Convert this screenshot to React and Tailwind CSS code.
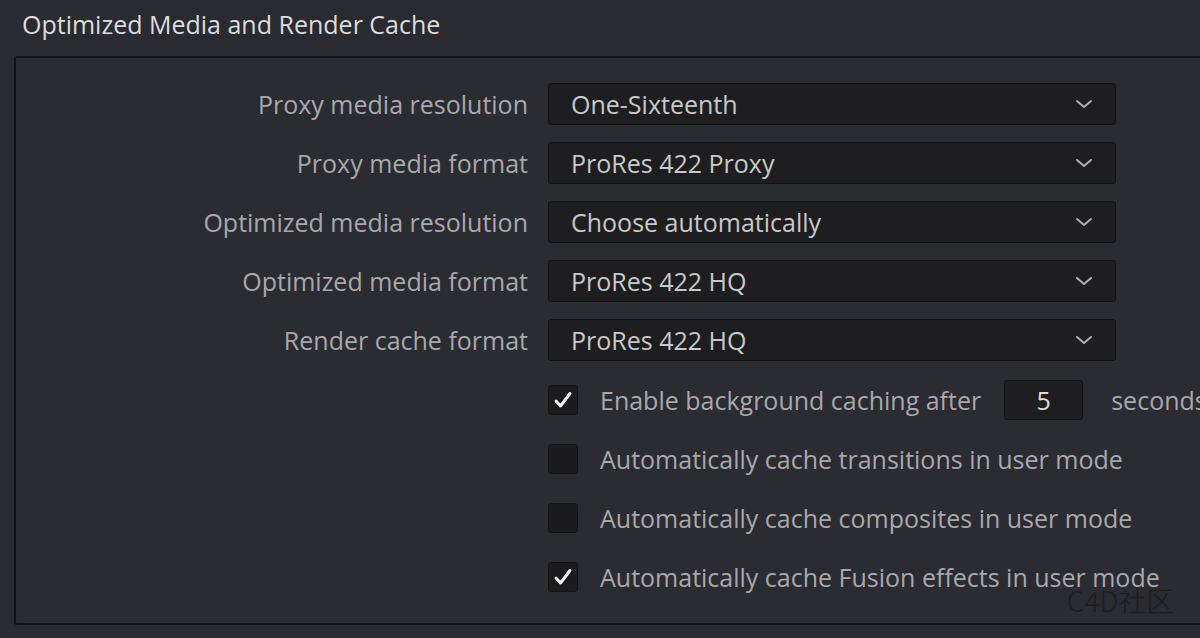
import React, { useState } from 'react'

const selects = [
  { label: 'Proxy media resolution', value: 'One-Sixteenth' },
  { label: 'Proxy media format', value: 'ProRes 422 Proxy' },
  { label: 'Optimized media resolution', value: 'Choose automatically' },
  { label: 'Optimized media format', value: 'ProRes 422 HQ' },
  { label: 'Render cache format', value: 'ProRes 422 HQ' },
]

function Chevron() {
  return (
    <svg width="18" height="12" viewBox="0 0 18 12" fill="none">
      <path d="M2 3l7 6 7-6" stroke="#b0b0b3" strokeWidth="2" strokeLinecap="round" strokeLinejoin="round" />
    </svg>
  )
}

function Checkbox({ checked, onClick }) {
  return (
    <button type="button" onClick={onClick} className="w-[30px] h-[30px] shrink-0 rounded-[3px] bg-[#1c1c1f] border border-[#141416] flex items-center justify-center">
      {checked && (
        <svg width="20" height="20" viewBox="0 0 20 20" fill="none">
          <path d="M3 11l4.5 5L17 3.5" stroke="#f2f2f2" strokeWidth="3" strokeLinecap="round" strokeLinejoin="round" />
        </svg>
      )}
    </button>
  )
}

export default function App() {
  const [checks, setchecks] = useState([true, false, false, true])
  const toggle = (i) => setchecks(checks.map((c, j) => (j === i ? !c : c)))

  return (
    <div className="w-[1200px] h-[638px] overflow-hidden bg-[#2a2a31] font-['Open_Sans',sans-serif] relative">
      <h1 className="pl-[22px] pt-[5px] h-[56px] text-[25px] text-[#dcdcde] leading-[38px]">Optimized Media and Render Cache</h1>
      <div className="ml-[14px] w-[1200px] h-[569px] border-2 border-[#141417] rounded-[3px] bg-[#2b2b32] pt-[25px]">
        <div className="flex flex-col gap-[17px]">
          {selects.map((s) => (
            <div key={s.label} className="flex items-center">
              <span className="w-[512px] text-right text-[25px] text-[#a8a8ac] leading-none whitespace-nowrap">{s.label}</span>
              <div className="ml-[20px] w-[568px] h-[42px] bg-[#1e1e21] border border-[#131315] rounded-[3px] flex items-center justify-between pl-[22px] pr-[22px]">
                <span className="text-[25px] text-[#c8c8cb] leading-none">{s.value}</span>
                <Chevron />
              </div>
            </div>
          ))}
        </div>
        <div className="flex flex-col gap-[29px] mt-[24px] ml-[532px]">
          <div className="flex items-center h-[30px]">
            <Checkbox checked={checks[0]} onClick={() => toggle(0)} />
            <span className="ml-[22px] text-[25px] text-[#a8a8ac] whitespace-nowrap leading-none">Enable background caching after</span>
            <div className="ml-[23px] w-[79px] h-[40px] shrink-0 bg-[#1e1e21] border border-[#131315] rounded-[3px] flex items-center justify-center text-[25px] text-[#dcdcde] leading-none">5</div>
            <span className="ml-[28px] text-[25px] text-[#a8a8ac] whitespace-nowrap leading-none">seconds</span>
          </div>
          {[
            'Automatically cache transitions in user mode',
            'Automatically cache composites in user mode',
            'Automatically cache Fusion effects in user mode',
          ].map((t, i) => (
            <div key={t} className="flex items-center h-[30px]">
              <Checkbox checked={checks[i + 1]} onClick={() => toggle(i + 1)} />
              <span className="ml-[22px] text-[25px] text-[#a8a8ac] whitespace-nowrap leading-none">{t}</span>
            </div>
          ))}
        </div>
      </div>
      <span className="absolute left-[1067px] top-[579px] text-[28px] text-[#1d1d20] font-['Noto_Sans_CJK_SC',sans-serif] font-light">C4D社区</span>
    </div>
  )
}
